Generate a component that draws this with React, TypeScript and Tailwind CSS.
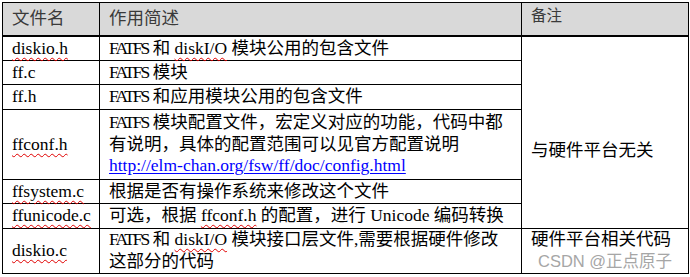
const FONT = "font-['Liberation_Serif','Noto_Sans_CJK_SC',serif]"

// word-style red squiggle under "unknown" words
function Sq({ children }: { children: React.ReactNode }) {
  return (
    <span className="underline decoration-wavy decoration-[#e00000] decoration-1 underline-offset-[3px]">
      {children}
    </span>
  )
}

// FATFS is rendered narrower in the source doc
function Fs() {
  return <span className="tracking-[-2px]">FATFS</span>
}

const cell = 'border border-black px-[9px] leading-[21.5px]'

export default function App() {
  return (
    <div className={`w-[690px] h-[277px] bg-white text-black text-[17.5px] ${FONT} pt-[2px] pl-[2px]`}>
      <table className="table-fixed border-collapse w-[686px]">
        <colgroup>
          <col className="w-[97px]" />
          <col className="w-[422px]" />
          <col className="w-[167px]" />
        </colgroup>
        <thead>
          <tr className="h-[33px] bg-[#d9d9d9] text-[#3a3a3a]">
            <th className={`${cell} border-b-2 text-left font-normal align-middle`}>文件名</th>
            <th className={`${cell} border-b-2 text-left font-normal align-middle`}>作用简述</th>
            <th className={`${cell} border-b-2 text-left font-normal align-top pt-[2px] text-[15.5px]`}>备注</th>
          </tr>
        </thead>
        <tbody>
          <tr className="h-[25px]">
            <td className={`${cell} align-middle`}><Sq>diskio.h</Sq></td>
            <td className={`${cell} align-middle whitespace-nowrap`}>
              <Fs /> 和 <Sq>diskI/O</Sq> 模块公用的包含文件
            </td>
            <td rowSpan={6} className={`${cell} align-top pt-[103px]`}>与硬件平台无关</td>
          </tr>
          <tr className="h-[24px]">
            <td className={`${cell} align-middle`}>ff.c</td>
            <td className={`${cell} align-middle`}><Fs /> 模块</td>
          </tr>
          <tr className="h-[25px]">
            <td className={`${cell} align-middle`}>ff.h</td>
            <td className={`${cell} align-middle`}><Fs /> 和应用模块公用的包含文件</td>
          </tr>
          <tr className="h-[70px]">
            <td className={`${cell} align-middle`}><Sq>ffconf.h</Sq></td>
            <td className={`${cell} align-middle whitespace-nowrap`}>
              <Fs /> 模块配置文件，宏定义对应的功能，代码中都
              <br />
              有说明，具体的配置范围可以见官方配置说明
              <br />
              <span className="text-[#0000ff] underline underline-offset-2">http://elm-chan.org/fsw/ff/doc/config.html</span>
            </td>
          </tr>
          <tr className="h-[24px]">
            <td className={`${cell} align-middle`}><Sq>ffsystem.c</Sq></td>
            <td className={`${cell} align-middle`}>根据是否有操作系统来修改这个文件</td>
          </tr>
          <tr className="h-[25px]">
            <td className={`${cell} align-middle whitespace-nowrap`}><Sq>ffunicode.c</Sq></td>
            <td className={`${cell} align-middle whitespace-nowrap`}>
              可选，根据 <Sq>ffconf.h</Sq> 的配置，进行 Unicode 编码转换
            </td>
          </tr>
          <tr className="h-[45px]">
            <td className={`${cell} align-middle`}><Sq>diskio.c</Sq></td>
            <td className={`${cell} align-top whitespace-nowrap`}>
              <Fs /> 和 <Sq>diskI/O</Sq> 模块接口层文件,需要根据硬件修改
              <br />
              这部分的代码
            </td>
            <td className={`${cell} align-top relative`}>
              硬件平台相关代码
              <span className="absolute left-[16px] top-[22px] text-[16.5px] text-[#a6a6a6] font-['Liberation_Sans','Noto_Sans_CJK_SC',sans-serif]">
                CSDN @正点原子
              </span>
            </td>
          </tr>
        </tbody>
      </table>
    </div>
  )
}
